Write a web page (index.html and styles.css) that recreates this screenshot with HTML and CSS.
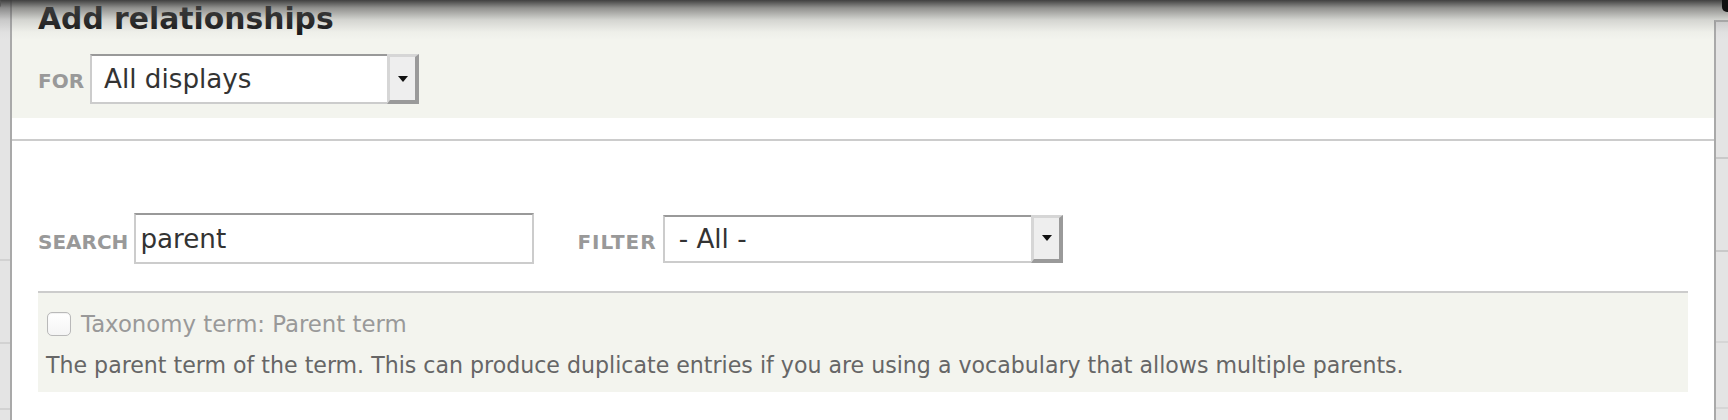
FILE: index.html
```html
<!DOCTYPE html>
<html lang="en">
<head>
<meta charset="utf-8">
<title>Add relationships</title>
<link rel="stylesheet" href="styles.css">
</head>
<body>
<div class="frame">
  <div class="side-left">
    <div class="sl-a"></div>
    <div class="sl-b"></div>
    <div class="sl-c"></div>
    <div class="sl-d"></div>
  </div>
  <div class="dialog">
    <div class="header">
      <h1 class="title">Add relationships</h1>
      <div class="for-row">
        <span class="label">For</span>
        <div class="select select-for">
          <span class="select-text">All displays</span>
          <span class="select-btn"><span class="arrow"></span></span>
        </div>
      </div>
    </div>
    <div class="body">
      <div class="filters">
        <div class="field">
          <span class="label">Search</span>
          <div class="input"><span class="input-text">parent</span></div>
        </div>
        <div class="field field-filter">
          <span class="label">Filter</span>
          <div class="select select-filter">
            <span class="select-text">- All -</span>
            <span class="select-btn"><span class="arrow"></span></span>
          </div>
        </div>
      </div>
      <div class="result">
        <div class="option">
          <span class="checkbox"></span>
          <span class="option-label">Taxonomy term: Parent term</span>
        </div>
        <div class="description">The parent term of the term. This can produce duplicate entries if you are using a vocabulary that allows multiple parents.</div>
      </div>
    </div>
  </div>
  <div class="side-right">
    <div class="sr-cap"></div>
    <div class="sr-panel">
      <div class="sr-a"></div>
      <div class="sr-b"></div>
      <div class="sr-c"></div>
      <div class="sr-d"></div>
    </div>
  </div>
</div>
<div class="top-shadow"></div>
<span class="corner-ring"></span>
<span class="corner-blob"></span>
</body>
</html>
```

FILE: styles.css
```css
html, body {
  margin: 0;
  padding: 0;
}
body {
  width: 1728px;
  height: 420px;
  overflow: hidden;
  position: relative;
  background: #e4e4e4;
  font-family: "DejaVu Sans", Verdana, sans-serif;
  color: #333;
}
.frame {
  display: flex;
  height: 420px;
}

/* left page strip */
.side-left {
  width: 10px;
  background: #e4e4e4;
  display: flex;
  flex-direction: column;
}
.sl-a { height: 261px; border-bottom: 2px solid #d2d2d2; box-sizing: border-box; }
.sl-b { height: 83px; border-bottom: 2px solid #d2d2d2; box-sizing: border-box; }
.sl-c { height: 66px; border-bottom: 2px solid #d2d2d2; box-sizing: border-box; }
.sl-d { flex: 1; }

/* dialog */
.dialog {
  width: 1702px;
  border-left: 2px solid #a9a9a9;
  background: #fff;
  display: flex;
  flex-direction: column;
}
.header {
  height: 118px;
  box-sizing: border-box;
  background: #f3f4ee;
  padding: 0 26px;
}
.title {
  margin: 0;
  padding-top: 2px;
  font-size: 29.8px;
  line-height: 34px;
  font-weight: 700;
  color: #151515;
}
.for-row {
  margin-top: 18px;
  display: flex;
  align-items: baseline;
}
.label {
  font-size: 20px;
  font-weight: 700;
  text-transform: uppercase;
  color: #999;
  margin-right: 6px;
}

/* selects and input */
.select, .input {
  box-sizing: border-box;
  background: #fff;
  border: 2px solid #ccc;
  border-top-color: #999;
  display: flex;
  align-items: stretch;
}
.select-for {
  width: 329px;
  height: 50px;
  border-right: none;
}
.select-text, .input-text {
  flex: 1;
  font-size: 26.2px;
  color: #333;
  display: flex;
  align-items: center;
}
.select-for .select-text {
  padding-left: 12px;
  line-height: 46px;
}
.select-btn {
  width: 32px;
  box-sizing: border-box;
  margin-top: -2px;
  margin-bottom: -2px;
  background: #eee;
  border-style: solid;
  border-width: 3px 4px 4px 3px;
  border-color: #d6d6d6 #9a9a9a #9a9a9a #d6d6d6;
  display: flex;
  align-items: center;
  justify-content: center;
}
.arrow {
  width: 0;
  height: 0;
  border-left: 5px solid transparent;
  border-right: 5px solid transparent;
  border-top: 6px solid #111;
  margin-left: 1px;
}

.body {
  flex: 1;
  margin-top: 21px;
  border-top: 2px solid #cccccc;
  padding: 72px 26px 0;
}
.filters {
  display: flex;
  align-items: center;
}
.field {
  display: flex;
  align-items: center;
}
.field .label {
  margin-right: 6px;
  padding-top: 6px;
}
.input {
  width: 400px;
  height: 51px;
}
.input-text {
  padding-left: 4px;
}
.field-filter {
  margin-left: 43px;
}
.field-filter .label {
  margin-right: 6px;
  letter-spacing: 1px;
}
.select-filter {
  width: 400px;
  height: 48px;
  border-right: none;
}
.select-filter .select-text {
  padding-left: 14px;
}

/* result box */
.result {
  margin-top: 27px;
  border-top: 2px solid #cccccc;
  background: #f3f4ee;
  padding: 19px 8px 14px;
}
.option {
  display: flex;
  align-items: center;
}
.checkbox {
  width: 24px;
  height: 24px;
  box-sizing: border-box;
  margin-left: 1px;
  border: 1px solid #b9b9b9;
  border-radius: 5px;
  background: linear-gradient(#ffffff, #f4f4f4);
  box-shadow: inset 0 1px 1px rgba(0,0,0,0.06);
}
.option-label {
  margin-left: 10px;
  font-size: 22.8px;
  line-height: 24px;
  color: #999;
}
.description {
  margin-top: 16px;
  font-size: 22.1px;
  line-height: 26px;
  color: #666;
}

/* right page strip */
.side-right {
  flex: 1;
  display: flex;
  flex-direction: column;
}
.sr-cap {
  height: 20px;
  background: #f3f4ee;
}
.sr-panel {
  flex: 1;
  border-left: 2px solid #a9a9a9;
  border-top: 2px solid #b4b4b4;
  background: #e4e4e4;
  display: flex;
  flex-direction: column;
}
.sr-a { height: 137px; border-bottom: 2px solid #c9c9c9; box-sizing: border-box; }
.sr-b { height: 93px; border-bottom: 2px solid #c9c9c9; box-sizing: border-box; }
.sr-c { height: 91px; border-bottom: 2px solid #d6d6d6; box-sizing: border-box; }
.sr-d { height: 66px; border-bottom: 2px solid #d6d6d6; box-sizing: border-box; }

/* overlays */
.top-shadow {
  position: absolute;
  left: 0;
  top: 0;
  width: 1728px;
  height: 40px;
  background: linear-gradient(rgba(55,55,55,0.95) 0px, rgba(80,80,80,0.6) 8px, rgba(120,120,120,0.25) 20px, rgba(160,160,160,0.06) 32px, rgba(160,160,160,0) 40px);
  pointer-events: none;
}
.corner-ring {
  position: absolute;
  left: -6px;
  top: -2px;
  width: 7px;
  height: 11px;
  box-sizing: border-box;
  border: 2px solid #555;
  border-radius: 50%;
}
.corner-blob {
  position: absolute;
  right: -4px;
  top: -4px;
  width: 10px;
  height: 16px;
  border-radius: 5px;
  background: #111;
}
```
